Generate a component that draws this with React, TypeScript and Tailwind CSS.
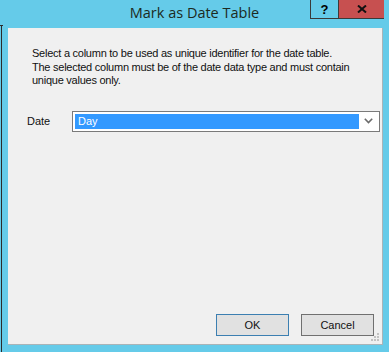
import React from 'react';

const UI = '"Liberation Sans", Arial, sans-serif';
const TITLE = '"Open Sans", "Noto Sans", sans-serif';

function ResizeGrip() {
  // little dotted triangle in the lower right corner
  const dots = [
    [6, 0],
    [3, 3], [6, 3],
    [0, 6], [3, 6], [6, 6],
  ];
  return (
    <svg width="9" height="9" viewBox="0 0 9 9" className="absolute right-[2px] bottom-[2px]">
      {dots.map(([x, y], i) => (
        <rect key={i} x={x} y={y} width="2" height="2" fill="#c2c2c2" />
      ))}
    </svg>
  );
}

export default function App() {
  return (
    <div className="relative w-[389px] h-[352px] bg-[#65cbe9] flex flex-col overflow-hidden" style={{ fontFamily: UI }}>
      {/* edge of the window behind */}
      <div className="absolute left-0 top-[25px] w-[3px] h-px bg-[#2b2b2b]" />
      <div className="absolute left-[1px] top-[25px] bottom-0 w-px bg-[#2b2b2b]" />

      {/* title bar */}
      <div className="relative h-[28px] shrink-0 flex items-start justify-center">
        <span
          className="mt-[3px] text-[14.5px] leading-[20px] text-[#1c2a22]"
          style={{ fontFamily: TITLE }}
        >
          Mark as Date Table
        </span>
        <div className="absolute top-0 right-[5px] flex">
          <button className="w-[28px] h-[19px] border-l border-b border-[#3a3a3a] bg-[#65cbe9] flex items-center justify-center text-[13px] font-bold text-black leading-none">
            ?
          </button>
          <button className="w-[46px] h-[19px] border-l border-b border-[#3a3a3a] bg-[#c75050] flex items-center justify-center">
            <svg width="10" height="8" viewBox="0 0 10 8">
              <path d="M1 0.5 L9 7.5 M9 0.5 L1 7.5" stroke="#111" strokeWidth="2" />
            </svg>
          </button>
        </div>
      </div>

      {/* client area */}
      <div className="relative flex-1 ml-[8px] mr-[6px] mb-[7px] bg-[#f0f0f0] border-r border-b border-[#a9b4b8] flex flex-col">
        <p className="pl-[24px] pt-[19px] text-[11px] leading-[13.5px] tracking-[-0.25px] text-[#111]">
          Select a column to be used as unique identifier for the date table.
          <br />
          The selected column must be of the date data type and must contain
          <br />
          unique values only.
        </p>

        <div className="flex items-center mt-[23px] pl-[19px]">
          <span className="w-[45px] text-[11px] text-[#111]">Date</span>
          <div className="w-[308px] h-[21px] border border-[#7a7a7a] bg-white flex items-stretch p-[2px]">
            <div className="flex-1 bg-[#3399ff] text-white text-[11px] leading-[15px] pl-[3px]">Day</div>
            <div className="w-[18px] flex items-center justify-center">
              <svg width="9" height="6" viewBox="0 0 9 6">
                <path d="M0.8 0.8 L4.5 4.6 L8.2 0.8" stroke="#6b6b6b" strokeWidth="1.6" fill="none" />
              </svg>
            </div>
          </div>
        </div>

        <div className="mt-auto flex justify-end gap-[12px] pr-[8px] pb-[8px]">
          <button className="w-[73px] h-[22px] border border-[#3c7fb1] bg-[#e1e1e1] text-[11px] text-[#111]">
            OK
          </button>
          <button className="w-[73px] h-[22px] border border-[#707070] bg-[#e1e1e1] text-[11px] text-[#111]">
            Cancel
          </button>
        </div>

        <ResizeGrip />
      </div>
    </div>
  );
}
